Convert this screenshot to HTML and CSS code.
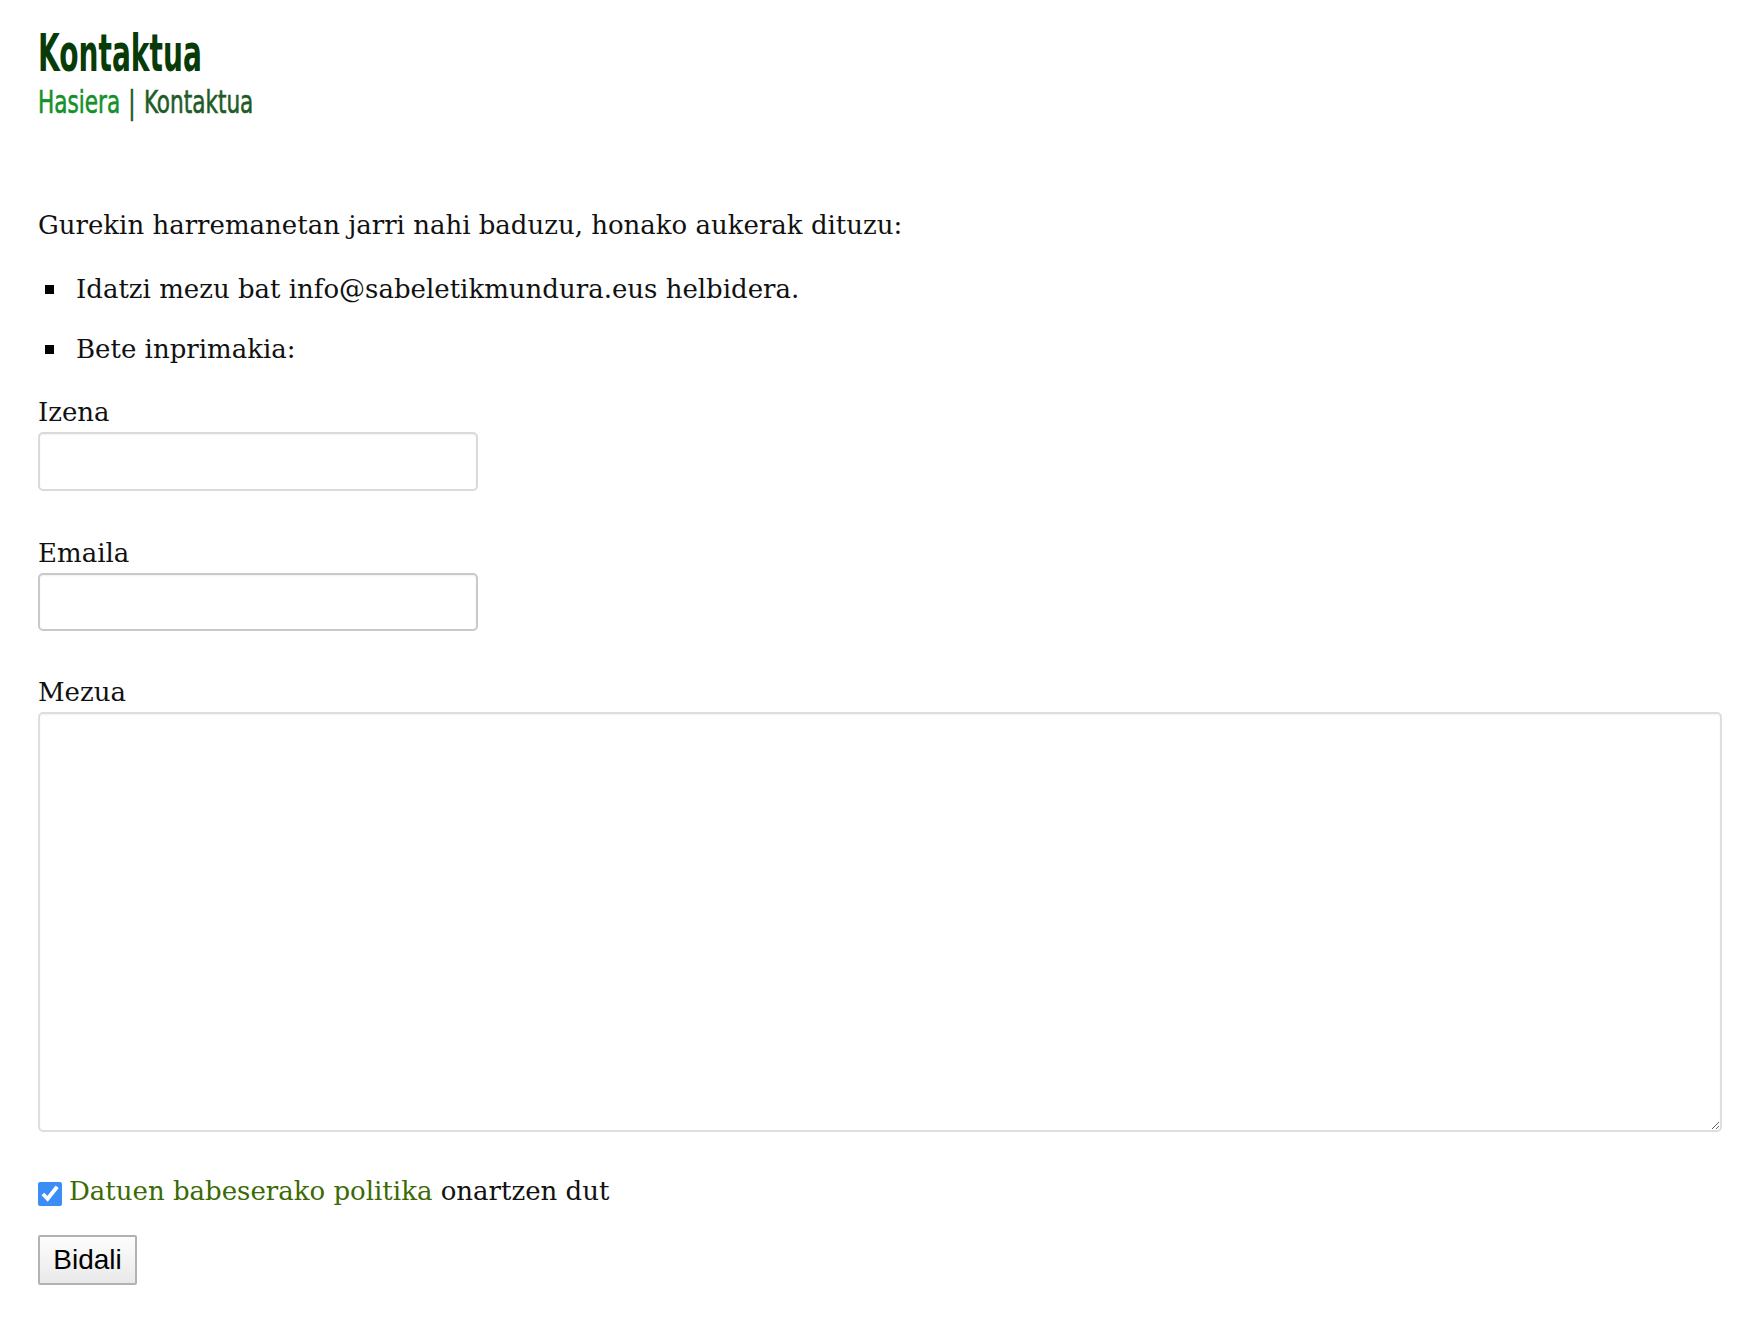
FILE: index.html
```html
<!DOCTYPE html>
<html lang="eu">
<head>
  <meta charset="UTF-8" />
  <meta name="viewport" content="width=device-width, initial-scale=1.0"/>
  <title>Kontaktua</title>
  <link rel="stylesheet" href="styles.css">
</head>
<body>

  <div class="page">
    <header class="page-header">
      <h1 class="page-title">Kontaktua</h1>
      <div class="breadcrumb">
        <a href="#" class="crumb-home">Hasiera</a>
        <span class="crumb-sep">|</span>
        <span class="crumb-current">Kontaktua</span>
      </div>
    </header>

    <div class="content">
      <p class="intro">Gurekin harremanetan jarri nahi baduzu, honako aukerak dituzu:</p>
      <ul class="options">
        <li>Idatzi mezu bat info@sabeletikmundura.eus helbidera.</li>
        <li>Bete inprimakia:</li>
      </ul>

      <form class="contact-form" onsubmit="return false">
        <div class="field">
          <label for="izena">Izena</label>
          <input type="text" id="izena" class="text-input" />
        </div>
        <div class="field">
          <label for="emaila">Emaila</label>
          <input type="email" id="emaila" class="text-input text-input--hover" />
        </div>
        <div class="field">
          <label for="mezua">Mezua</label>
          <textarea id="mezua" class="message"></textarea>
        </div>

        <label class="privacy">
          <input type="checkbox" class="privacy-check" checked />
          <span><a href="#" class="privacy-link">Datuen babeserako politika</a> onartzen dut</span>
        </label>

        <button type="submit" class="send-btn">Bidali</button>
      </form>
    </div>
  </div>

</body>
</html>
```

FILE: styles.css
```css
html, body {
  margin: 0;
  padding: 0;
  background: #fff;
}

body {
  font-family: "DejaVu Serif", serif;
  font-size: 26px;
  line-height: 30px;
  color: #111;
}

.page {
  padding: 0 40px 40px 38px;
}

/* cabecera */
.page-header {
  padding-top: 26px;
}

.page-title {
  margin: 0;
  font-family: "DejaVu Sans Condensed", "DejaVu Sans", sans-serif;
  font-weight: bold;
  font-size: 52px;
  line-height: 54px;
  color: #073b08;
  transform: scaleX(0.6);
  transform-origin: left center;
}

.breadcrumb {
  margin-top: 4px;
  font-family: "DejaVu Sans Condensed", "DejaVu Sans", sans-serif;
  font-size: 32px;
  line-height: 36px;
  display: flex;
  gap: 11px;
  -webkit-text-stroke: 0.6px currentColor;
  transform: scaleX(0.75);
  transform-origin: left center;
}

.crumb-home {
  color: #14902c;
  text-decoration: none;
}

.crumb-sep,
.crumb-current {
  color: #1d5c26;
}

.content {
  padding-top: 90px;
}

.intro {
  margin: 0 0 34px;
}

.options {
  list-style: none;
  margin: 0;
  padding: 0;
}

.options li {
  display: flex;
  align-items: center;
  gap: 22px;
  margin-bottom: 30px;
}

.options li::before {
  content: "";
  flex: none;
  width: 9px;
  height: 9px;
  margin-left: 7px;
  background: #000;
}

.options li:last-child {
  margin-bottom: 33px;
}

/* formulario */
.field {
  margin-bottom: 46.5px;
}

.field label {
  display: block;
  margin-bottom: 5px;
}

.text-input {
  display: block;
  box-sizing: border-box;
  width: 440px;
  height: 59px;
  border: 2px solid #dadada;
  border-radius: 5px;
  box-shadow: inset 0 1px 2px rgba(0, 0, 0, 0.06);
  font: inherit;
  padding: 4px 10px;
}

.text-input--hover {
  border-color: #c9c9c9;
  height: 58px;
}

.message {
  display: block;
  box-sizing: border-box;
  width: 100%;
  height: 420px;
  border: 2px solid #dedede;
  border-radius: 5px;
  box-shadow: inset 0 1px 2px rgba(0, 0, 0, 0.06);
  font: inherit;
  padding: 8px 10px;
}

.privacy {
  display: flex;
  align-items: center;
  gap: 7px;
  font-size: 26px;
  line-height: 34px;
  margin-top: -5px;
}

.privacy-check {
  width: 24px;
  height: 24px;
  margin: 6px 0 0;
  accent-color: #3b8ef5;
}

.privacy-link {
  color: #3b6a05;
  text-decoration: none;
}

.send-btn {
  display: block;
  margin-top: 27px;
  width: 99px;
  height: 50px;
  padding: 0;
  font-family: "Liberation Sans", Arial, sans-serif;
  font-size: 28px;
  color: #000;
  border: 2px solid #b2b2b2;
  border-radius: 2px;
  background: linear-gradient(#fdfdfd, #e9e9e9);
  cursor: pointer;
}
```
